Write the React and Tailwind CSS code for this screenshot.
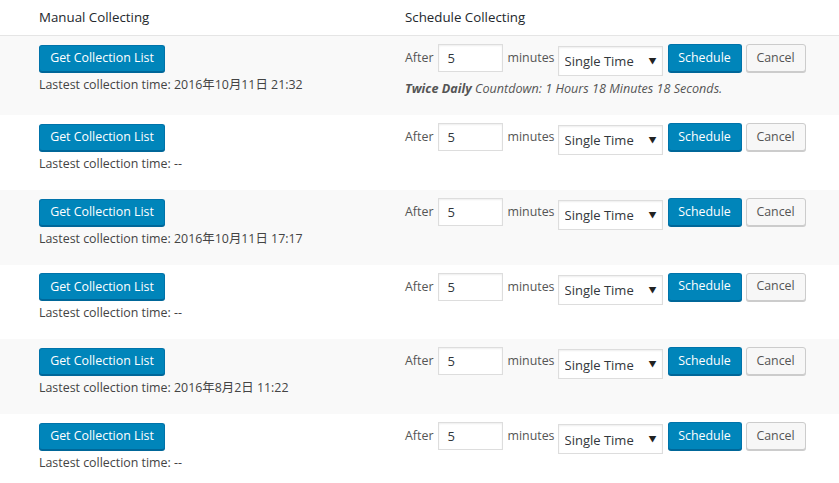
import { useState } from "react";

const ROWS = [
  { last: "2016年10月11日 21:32", countdown: { name: "Twice Daily", text: "Countdown: 1 Hours 18 Minutes 18 Seconds." } },
  { last: "--" },
  { last: "2016年10月11日 17:17" },
  { last: "--" },
  { last: "2016年8月2日 11:22" },
  { last: "--" },
];

const FONT = { fontFamily: "'Open Sans', 'Noto Sans CJK SC', sans-serif" };

const CollectRow = ({ row, striped }) => {
  const [minutes, setMinutes] = useState("5");
  const [mode, setMode] = useState("single");

  return (
    <div className={`flex pt-[8px] pb-[16px] ${striped ? "bg-[#f9f9f9]" : "bg-white"}`}>
      {/* Manual */}
      <div className="w-[405px] pl-[39px] shrink-0">
        <button className="h-[27px] w-[126px] rounded-[3px] border border-[#0073aa] border-b-[#006799] bg-[#0085ba] text-[12.4px] text-white shadow-[0_1px_0_#006799]">
          Get Collection List
        </button>
        <p className="mt-[3px] text-[12.4px] leading-[20px] text-[#444]">
          Lastest collection time: {row.last}
        </p>
      </div>

      {/* Schedule */}
      <div>
        <div className="flex items-start">
          <span className="mr-[5px] text-[12.4px] leading-[28px] text-[#555]">After</span>
          <input
            value={minutes}
            onChange={(e) => setMinutes(e.target.value)}
            className="h-[28px] w-[65px] border border-[#ddd] bg-white px-[8px] text-[13px] text-[#32373c] shadow-[inset_0_1px_2px_rgba(0,0,0,0.07)] outline-none"
          />
          <span className="ml-[4px] mr-[3px] text-[12.4px] leading-[28px] text-[#555]">minutes</span>
          <div className="relative mt-[2px]">
            <select
              value={mode}
              onChange={(e) => setMode(e.target.value)}
              className="h-[30px] w-[105px] appearance-none border border-[#ddd] bg-white pl-[6px] pt-[2px] text-[13px] text-[#32373c] shadow-[inset_0_1px_2px_rgba(0,0,0,0.07)] outline-none"
            >
              <option value="single">Single Time</option>
              <option value="twice">Twice Daily</option>
            </select>
            <span className="pointer-events-none absolute right-[6px] top-[9px] text-[8px] text-[#222]">▼</span>
          </div>
          <button className="ml-[5px] h-[28px] w-[74px] rounded-[3px] border border-[#0073aa] border-b-[#006799] bg-[#0085ba] text-[12.4px] text-white shadow-[0_1px_0_#006799]">
            Schedule
          </button>
          <button className="ml-[4px] h-[28px] w-[60px] rounded-[3px] border border-[#ccc] bg-[#f7f7f7] text-[12.4px] text-[#555] shadow-[0_1px_0_#ccc]">
            Cancel
          </button>
        </div>
        {row.countdown && (
          <p className="mt-[3px] text-[12.6px] italic leading-[20px] text-[#555]">
            <b>{row.countdown.name}</b> {row.countdown.text}
          </p>
        )}
      </div>
    </div>
  );
};

const App = () => {
  return (
    <div className="min-h-screen bg-white" style={FONT}>
      {/* header */}
      <div className="flex h-[36px] items-center border-b border-[#e5e5e5] text-[13.3px] text-[#23282d]">
        <div className="w-[405px] pl-[39px]">Manual Collecting</div>
        <div>Schedule Collecting</div>
      </div>

      {ROWS.map((row, i) => (
        <CollectRow key={i} row={row} striped={i % 2 === 0} />
      ))}
    </div>
  );
};

export default App;
